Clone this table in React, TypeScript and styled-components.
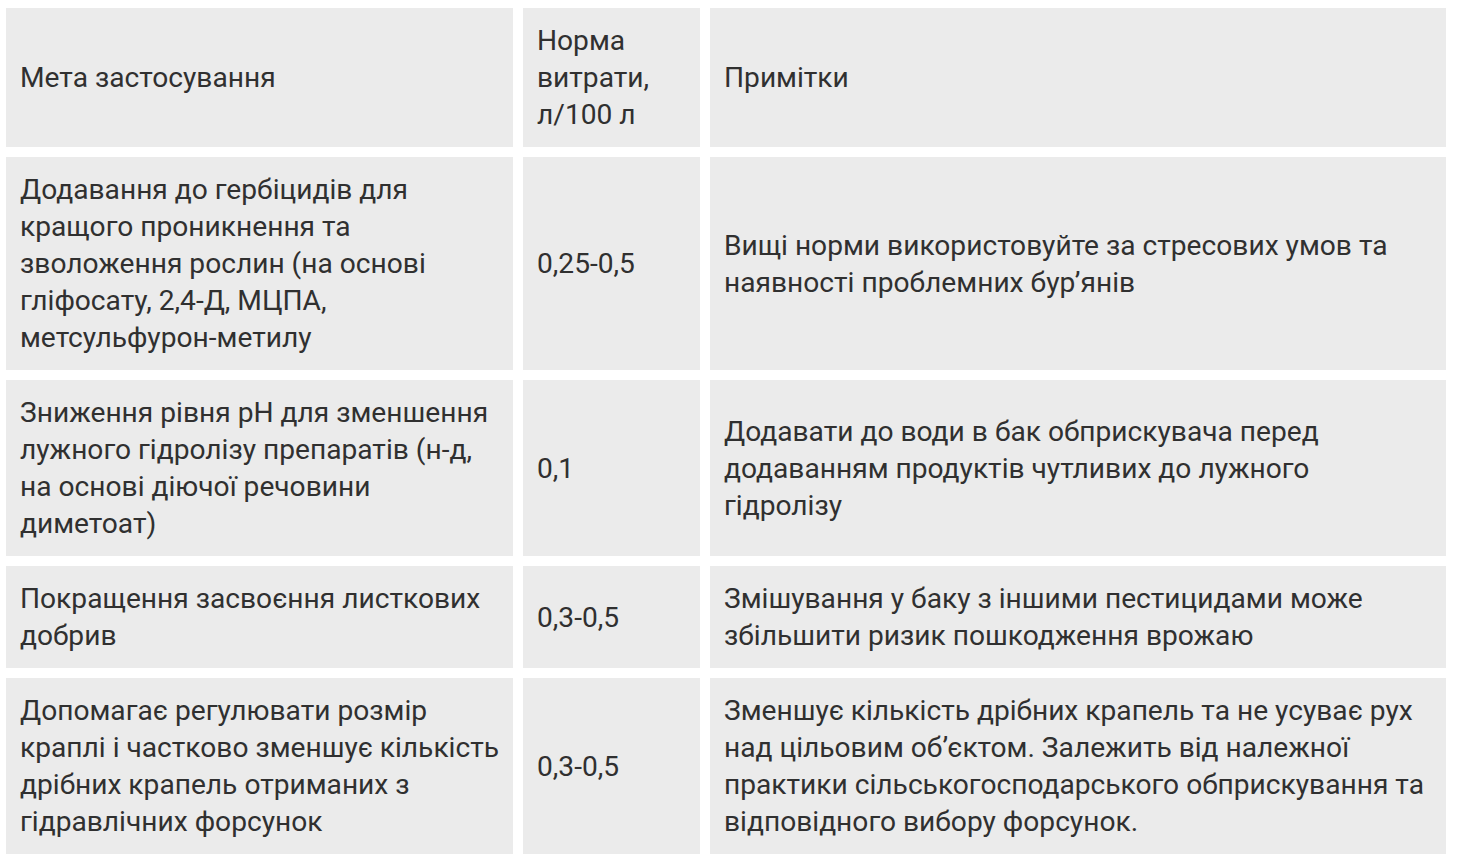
import React from "react";
import styled, { createGlobalStyle } from "styled-components";

type Row = {
  purpose: string[];
  rate: string;
  notes: string[];
};

const rows: Row[] = [
  {
    purpose: [
      "Додавання до гербіцидів для",
      "кращого проникнення та",
      "зволоження рослин (на основі",
      "гліфосату, 2,4-Д, МЦПА,",
      "метсульфурон-метилу",
    ],
    rate: "0,25-0,5",
    notes: [
      "Вищі норми використовуйте за стресових умов та",
      "наявності проблемних бур’янів",
    ],
  },
  {
    purpose: [
      "Зниження рівня pH для зменшення",
      "лужного гідролізу препаратів (н-д,",
      "на основі діючої речовини",
      "диметоат)",
    ],
    rate: "0,1",
    notes: [
      "Додавати до води в бак обприскувача перед",
      "додаванням продуктів чутливих до лужного",
      "гідролізу",
    ],
  },
  {
    purpose: ["Покращення засвоєння листкових", "добрив"],
    rate: "0,3-0,5",
    notes: [
      "Змішування у баку з іншими пестицидами може",
      "збільшити ризик пошкодження врожаю",
    ],
  },
  {
    purpose: [
      "Допомагає регулювати розмір",
      "краплі і частково зменшує кількість",
      "дрібних крапель отриманих з",
      "гідравлічних форсунок",
    ],
    rate: "0,3-0,5",
    notes: [
      "Зменшує кількість дрібних крапель та не усуває рух",
      "над цільовим об’єктом. Залежить від належної",
      "практики сільськогосподарського обприскування та",
      "відповідного вибору форсунок.",
    ],
  },
];

const GlobalStyle = createGlobalStyle`
  html, body {
    margin: 0;
    padding: 0;
    background: #ffffff;
  }
`;

export default function App(): React.ReactElement {
  return (
    <>
      <GlobalStyle />
      <Page>
        <Table>
          <Cell>
            <Lines lines={["Мета застосування"]} />
          </Cell>
          <Cell>
            <Lines lines={["Норма", "витрати,", "л/100 л"]} />
          </Cell>
          <Cell>
            <Lines lines={["Примітки"]} />
          </Cell>
          {rows.map((row) => (
            <React.Fragment key={row.rate + row.purpose[0]}>
              <Cell>
                <Lines lines={row.purpose} />
              </Cell>
              <Cell>
                <Lines lines={[row.rate]} />
              </Cell>
              <Cell>
                <Lines lines={row.notes} />
              </Cell>
            </React.Fragment>
          ))}
        </Table>
      </Page>
    </>
  );
}

function Lines({ lines }: { lines: string[] }): React.ReactElement {
  return (
    <Text>
      {lines.map((line) => (
        <Line key={line}>{line}</Line>
      ))}
    </Text>
  );
}

const Page = styled.div`
  padding: 8px 0 0 6px;
`;

const Table = styled.div`
  display: grid;
  grid-template-columns: 507px 177px 736px;
  gap: 10px;
`;

const Cell = styled.div`
  display: flex;
  align-items: center;
  background-color: #ebebeb;
  padding: 14px;
`;

const Text = styled.div`
  font-family: Roboto, "Liberation Sans", sans-serif;
  font-size: 28.15px;
  line-height: 37px;
  color: #303030;
`;

const Line = styled.div`
  white-space: nowrap;
`;
